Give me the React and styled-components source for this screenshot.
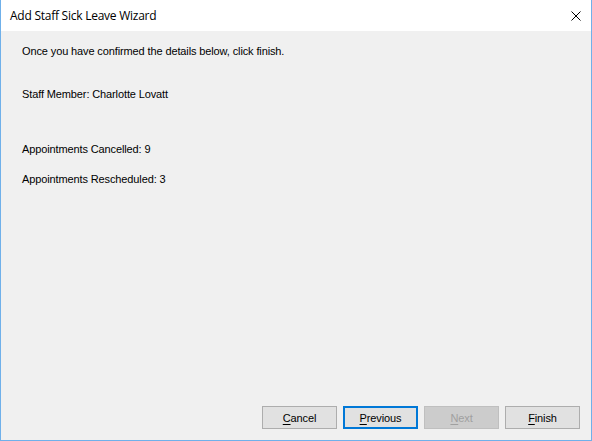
import styled, { createGlobalStyle } from "styled-components";

const Global = createGlobalStyle`
  html, body {
    margin: 0;
    padding: 0;
    background: #ffffff;
  }
`;

const Window = styled.div`
  width: 592px;
  height: 441px;
  box-sizing: border-box;
  border: 1px solid #6fb0ea;
  border-top: none;
  display: flex;
  flex-direction: column;
  background: #f0f0f0;
  font-family: "Liberation Sans", Arial, sans-serif;
  font-size: 11px;
  letter-spacing: -0.12px;
  color: #000;
`;

const TitleBar = styled.div`
  height: 31px;
  flex: none;
  background: #ffffff;
  display: flex;
  align-items: center;
  justify-content: space-between;
  padding-left: 9px;
`;

const Title = styled.span`
  font-family: "Open Sans", "Noto Sans", sans-serif;
  font-size: 12px;
  letter-spacing: -0.25px;
  color: #000;
`;

const CloseButton = styled.div`
  width: 30px;
  height: 31px;
  display: flex;
  align-items: center;
  justify-content: center;
`;

const Body = styled.div`
  flex: 1;
  display: flex;
  flex-direction: column;
  padding: 14px 11px 11px 21px;
`;

const Line = styled.div`
  line-height: 13px;
  margin-top: ${(p) => p.$gap || 0}px;
`;

const Footer = styled.div`
  margin-top: auto;
  display: flex;
  justify-content: flex-end;
  gap: 6px;
`;

const Button = styled.button`
  width: 75px;
  height: 23px;
  box-sizing: border-box;
  padding: 0;
  font-family: "Liberation Sans", Arial, sans-serif;
  font-size: 11px;
  letter-spacing: -0.12px;
  color: ${(p) => (p.disabled ? "#a0a0a0" : "#000")};
  background: ${(p) => (p.disabled ? "#cccccc" : "#e1e1e1")};
  border: ${(p) =>
    p.$default ? "2px solid #0078d7" : p.disabled ? "1px solid #bfbfbf" : "1px solid #adadad"};
  border-radius: 0;
  outline: none;

  u {
    text-decoration: underline;
    text-underline-offset: 2px;
  }
`;

export default function App() {
  return (
    <>
      <Global />
      <Window>
        <TitleBar>
          <Title>Add Staff Sick Leave Wizard</Title>
          <CloseButton>
            <svg width="10" height="10" viewBox="0 0 10 10">
              <path d="M0.5 0.5 L9.5 9.5 M9.5 0.5 L0.5 9.5" stroke="#000" strokeWidth="1" />
            </svg>
          </CloseButton>
        </TitleBar>
        <Body>
          <Line>Once you have confirmed the details below, click finish.</Line>
          <Line $gap={30}>Staff Member: Charlotte Lovatt</Line>
          <Line $gap={42}>Appointments Cancelled: 9</Line>
          <Line $gap={17}>Appointments Rescheduled: 3</Line>
          <Footer>
            <Button>
              <u>C</u>ancel
            </Button>
            <Button $default>
              <u>P</u>revious
            </Button>
            <Button disabled>
              <u>N</u>ext
            </Button>
            <Button>
              <u>F</u>inish
            </Button>
          </Footer>
        </Body>
      </Window>
    </>
  );
}
